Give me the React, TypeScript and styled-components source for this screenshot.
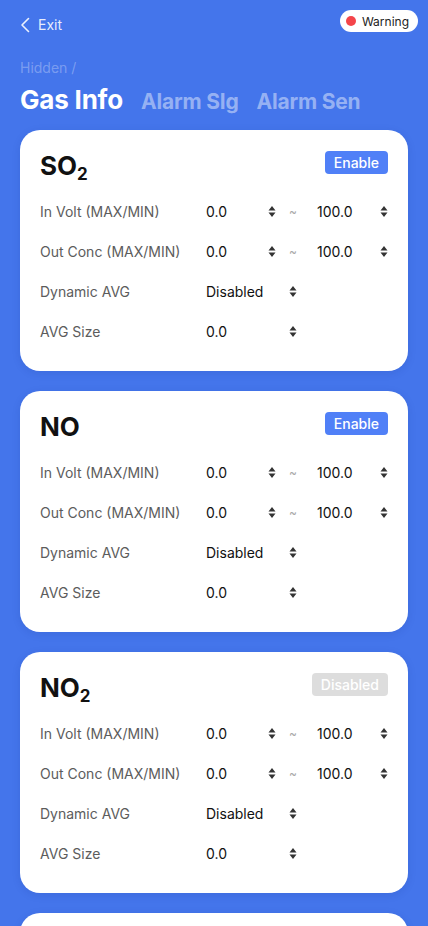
import React from "react";
import styled, { createGlobalStyle } from "styled-components";

const Global = createGlobalStyle`
  html, body { margin: 0; padding: 0; background: #4475EB; }
  body { font-family: Inter, "Noto Sans", sans-serif; -webkit-font-smoothing: antialiased; }
  * { box-sizing: border-box; }
`;

const Page = styled.div`
  width: 428px;
  height: 926px;
  overflow: hidden;
  background: #4475EB;
  padding: 0 20px;
`;

const TopBar = styled.div`
  display: flex;
  align-items: flex-start;
  justify-content: space-between;
  height: 42px;
`;

const ExitButton = styled.div`
  display: flex;
  align-items: center;
  gap: 8px;
  height: 20px;
  margin-top: 15px;
  color: rgba(255, 255, 255, 0.88);
  font-size: 14px;
  line-height: 20px;
`;

const WarningPill = styled.div`
  display: flex;
  align-items: center;
  gap: 6px;
  height: 22px;
  margin-top: 10px;
  padding: 0 9px 0 6px;
  margin-right: -10px;
  background: #fff;
  border-radius: 11px;
  font-size: 12px;
  color: #222;
`;

const Dot = styled.span`
  width: 10px;
  height: 10px;
  border-radius: 50%;
  background: #f4454a;
`;

const Crumb = styled.div`
  margin-top: 16px;
  font-size: 14px;
  color: rgba(255, 255, 255, 0.3);
  line-height: 20px;
`;

const Tabs = styled.div`
  display: flex;
  align-items: baseline;
  gap: 18px;
  margin-top: 4px;
  height: 36px;
  line-height: 36px;
`;

const Tab = styled.div<{ $active?: boolean }>`
  font-weight: 700;
  font-size: ${(p) => (p.$active ? "26px" : "21px")};
  color: ${(p) => (p.$active ? "#fff" : "rgba(255,255,255,0.45)")};
  letter-spacing: -0.2px;
`;

const Cards = styled.div`
  display: flex;
  flex-direction: column;
  gap: 20px;
  margin-top: 12px;
`;

const Card = styled.div`
  background: #fff;
  border-radius: 20px;
  padding: 20px 20px 20px;
  box-shadow: 0 2px 8px rgba(20, 40, 120, 0.12);
`;

const CardStub = styled(Card)`
  height: 60px;
`;

const CardHead = styled.div`
  display: flex;
  justify-content: space-between;
  align-items: flex-start;
  height: 36px;
  margin-bottom: 5px;
`;

const Title = styled.div`
  font-size: 26px;
  font-weight: 700;
  color: #111;
  line-height: 32px;
  sub {
    font-size: 17px;
    vertical-align: -5px;
    line-height: 0;
  }
`;

const StatusBadge = styled.div<{ $on: boolean }>`
  margin-top: 1px;
  height: 23px;
  padding: 0 9px;
  border-radius: 4px;
  display: flex;
  align-items: center;
  font-size: 14px;
  font-weight: 500;
  color: #fff;
  background: ${(p) => (p.$on ? "#5080F7" : "#DDDDDD")};
`;

const Row = styled.div`
  display: grid;
  grid-template-columns: 166px 70px 41px 71px;
  align-items: center;
  height: 40px;
`;

const Label = styled.div`
  font-size: 14px;
  color: #5c5c5c;
`;

const Select = styled.div<{ $wide?: boolean }>`
  display: flex;
  align-items: center;
  justify-content: space-between;
  font-size: 14px;
  color: #111;
  ${(p) => (p.$wide ? "grid-column: 2 / span 2; width: 91px;" : "")}
`;

const Tilde = styled.div`
  font-size: 12px;
  color: #aaa;
  padding-left: 13px;
`;

const Spinner = () => (
  <svg width="8" height="13" viewBox="0 0 8 13" style={{ flexShrink: 0 }}>
    <path d="M0.5 5.5 L4 1 L7.5 5.5 Z M0.5 7.5 L4 12 L7.5 7.5 Z" fill="#333" />
  </svg>
);

const Chevron = () => (
  <svg width="10" height="16" viewBox="0 0 10 16" fill="none">
    <path d="M8.5 1.5 L2 8 L8.5 14.5" stroke="rgba(255,255,255,0.9)" strokeWidth="1.6" strokeLinecap="round" strokeLinejoin="round" />
  </svg>
);

type Gas = { name: React.ReactNode; on: boolean };

const gases: Gas[] = [
  { name: <>SO<sub>2</sub></>, on: true },
  { name: <>NO</>, on: true },
  { name: <>NO<sub>2</sub></>, on: false },
];

const GasCard = ({ gas }: { gas: Gas }) => (
  <Card>
    <CardHead>
      <Title>{gas.name}</Title>
      <StatusBadge $on={gas.on}>{gas.on ? "Enable" : "Disabled"}</StatusBadge>
    </CardHead>
    <Row>
      <Label>In Volt (MAX/MIN)</Label>
      <Select>0.0<Spinner /></Select>
      <Tilde>~</Tilde>
      <Select>100.0<Spinner /></Select>
    </Row>
    <Row>
      <Label>Out Conc (MAX/MIN)</Label>
      <Select>0.0<Spinner /></Select>
      <Tilde>~</Tilde>
      <Select>100.0<Spinner /></Select>
    </Row>
    <Row>
      <Label>Dynamic AVG</Label>
      <Select $wide>Disabled<Spinner /></Select>
    </Row>
    <Row>
      <Label>AVG Size</Label>
      <Select $wide>0.0<Spinner /></Select>
    </Row>
  </Card>
);

export default function App() {
  return (
    <>
      <Global />
      <Page>
        <TopBar>
          <ExitButton>
            <Chevron />
            Exit
          </ExitButton>
          <WarningPill>
            <Dot />
            Warning
          </WarningPill>
        </TopBar>
        <Crumb>Hidden /</Crumb>
        <Tabs>
          <Tab $active>Gas Info</Tab>
          <Tab>Alarm SIg</Tab>
          <Tab>Alarm Sen</Tab>
        </Tabs>
        <Cards>
          {gases.map((g, i) => (
            <GasCard key={i} gas={g} />
          ))}
          <CardStub />
        </Cards>
      </Page>
    </>
  );
}
